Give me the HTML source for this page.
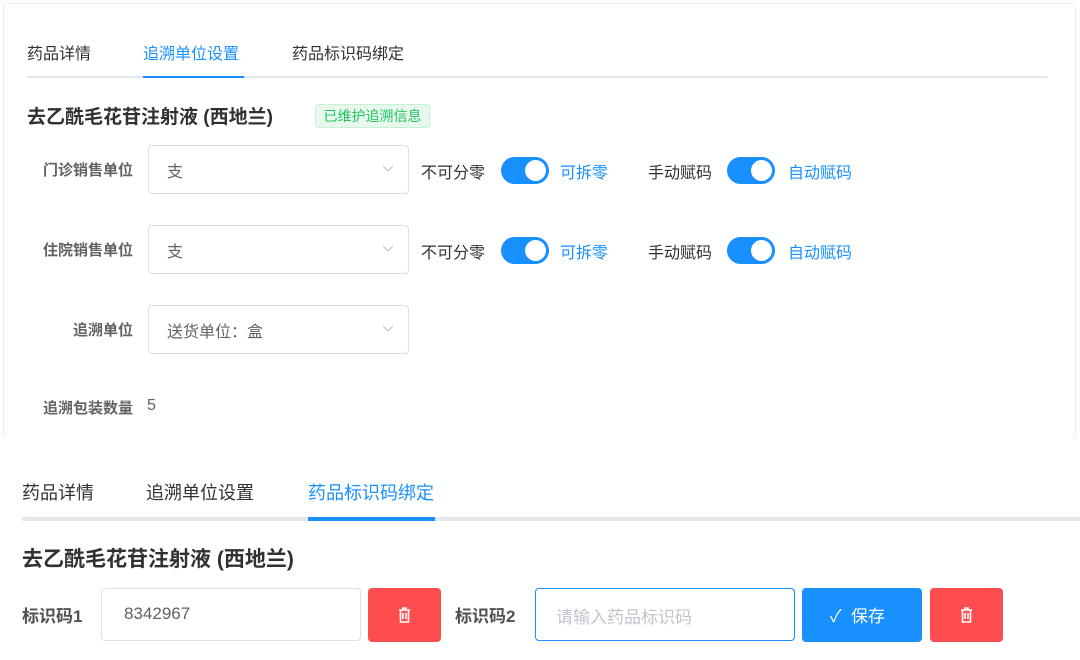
<!DOCTYPE html>
<html><head><meta charset="utf-8"><style>
*{box-sizing:border-box;margin:0;padding:0}
body{width:1080px;height:660px;background:#fff;font-family:"Liberation Sans","Noto Sans CJK SC",sans-serif;position:relative;overflow:hidden;color:#303133}
.abs{position:absolute;white-space:nowrap}
.card{position:absolute;left:3px;top:3px;width:1073px;height:436px;border:1px solid #ebeef5;border-top:1px solid #f0f0f3;border-bottom:none;border-radius:4px}
.lbl{font-size:15px;color:#606266;font-weight:bold;text-align:right;width:120px}
.sel{position:absolute;left:148px;width:261px;height:49px;border:1px solid #dcdfe6;border-radius:4px;font-size:16px;color:#606266;padding:12px 0 0 18px}
.sel svg{position:absolute;right:14px;top:19px}
.sw{position:absolute;width:48px;height:27px;border-radius:14px;background:#1890ff}
.sw:after{content:"";position:absolute;right:3px;top:3px;width:21px;height:21px;border-radius:50%;background:#fff}
.t15{font-size:16px}
.blue{color:#1890ff}
.btn{position:absolute;top:588px;height:54px;border-radius:4px}
</style></head><body>
<div class="card"></div>
<div class="abs" style="left:27px;top:40px;font-size:16px">药品详情</div>
<div class="abs blue" style="left:143px;top:40px;font-size:16px">追溯单位设置</div>
<div class="abs" style="left:292px;top:40px;font-size:16px">药品标识码绑定</div>
<div class="abs" style="left:27px;top:76px;width:1021px;height:2px;background:#e4e7ed"></div>
<div class="abs" style="left:143px;top:76px;width:101px;height:2px;background:#1890ff"></div>
<div class="abs" style="left:27px;top:102px;font-size:19px;font-weight:bold">去乙酰毛花苷注射液 (西地兰)</div>
<div class="abs" style="left:315px;top:104px;width:115px;height:24px;background:#e8f8ee;border:1px solid #c8f0d6;border-radius:3px;color:#22c55e;font-size:14px;text-align:center;line-height:22px">已维护追溯信息</div>

<div class="abs lbl" style="left:13px;top:159px">门诊销售单位</div>
<div class="sel" style="top:145px">支<svg width="12" height="8" viewBox="0 0 12 8"><path d="M1 1l5 5 5-5" stroke="#c0c4cc" fill="none" stroke-width="1.2"/></svg></div>
<div class="abs t15" style="left:421px;top:159px">不可分零</div>
<div class="sw" style="left:501px;top:157px"></div>
<div class="abs t15 blue" style="left:560px;top:159px">可拆零</div>
<div class="abs t15" style="left:648px;top:159px">手动赋码</div>
<div class="sw" style="left:727px;top:157px"></div>
<div class="abs t15 blue" style="left:788px;top:159px">自动赋码</div>

<div class="abs lbl" style="left:13px;top:239px">住院销售单位</div>
<div class="sel" style="top:225px">支<svg width="12" height="8" viewBox="0 0 12 8"><path d="M1 1l5 5 5-5" stroke="#c0c4cc" fill="none" stroke-width="1.2"/></svg></div>
<div class="abs t15" style="left:421px;top:239px">不可分零</div>
<div class="sw" style="left:501px;top:237px"></div>
<div class="abs t15 blue" style="left:560px;top:239px">可拆零</div>
<div class="abs t15" style="left:648px;top:239px">手动赋码</div>
<div class="sw" style="left:727px;top:237px"></div>
<div class="abs t15 blue" style="left:788px;top:239px">自动赋码</div>

<div class="abs lbl" style="left:13px;top:319px">追溯单位</div>
<div class="sel" style="top:305px">送货单位：盒<svg width="12" height="8" viewBox="0 0 12 8"><path d="M1 1l5 5 5-5" stroke="#c0c4cc" fill="none" stroke-width="1.2"/></svg></div>
<div class="abs lbl" style="left:13px;top:397px">追溯包装数量</div>
<div class="abs t15" style="left:147px;top:397px;color:#606266">5</div>

<div class="abs" style="left:22px;top:479px;font-size:18px">药品详情</div>
<div class="abs" style="left:146px;top:479px;font-size:18px">追溯单位设置</div>
<div class="abs blue" style="left:308px;top:479px;font-size:18px">药品标识码绑定</div>
<div class="abs" style="left:22px;top:517px;width:1058px;height:4px;background:#e4e7ed"></div>
<div class="abs" style="left:308px;top:517px;width:127px;height:4px;background:#1890ff"></div>
<div class="abs" style="left:22px;top:543px;font-size:21px;font-weight:bold">去乙酰毛花苷注射液 (西地兰)</div>
<div class="abs" style="left:22px;top:602px;font-size:17px;font-weight:bold;color:#505257">标识码1</div>
<div class="abs" style="left:101px;top:588px;width:260px;height:53px;border:1px solid #dcdfe6;border-radius:4px;font-size:17px;color:#606266;padding:15px 0 0 22px">8342967</div>
<div class="btn" style="left:368px;width:73px;background:#ff4d4f"><svg style="position:absolute;left:30px;top:19px" width="13" height="16" viewBox="0 0 13 16"><path d="M1 3h11M5 3V1h3v2M2.5 3v12h8V3M5 6v6M8 6v6" stroke="#fff" stroke-width="1.6" fill="none"/></svg></div>
<div class="abs" style="left:455px;top:602px;font-size:17px;font-weight:bold;color:#505257">标识码2</div>
<div class="abs" style="left:535px;top:588px;width:260px;height:53px;border:1px solid #1890ff;border-radius:4px;font-size:17px;color:#c0c4cc;padding:14px 0 0 20px">请输入药品标识码</div>
<div class="btn" style="left:802px;width:120px;background:#1890ff;color:#fff;font-size:17px;padding:14px 0 0 28px">✓&nbsp;&nbsp;保存</div>
<div class="btn" style="left:930px;width:73px;background:#ff4d4f"><svg style="position:absolute;left:30px;top:19px" width="13" height="16" viewBox="0 0 13 16"><path d="M1 3h11M5 3V1h3v2M2.5 3v12h8V3M5 6v6M8 6v6" stroke="#fff" stroke-width="1.6" fill="none"/></svg></div>
</body></html>
